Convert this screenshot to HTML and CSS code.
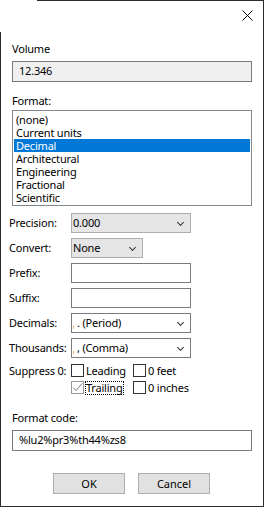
FILE: index.html
```html
<!DOCTYPE html>
<html lang="en">
<head>
    <meta charset="UTF-8">
    <meta name="viewport" content="width=device-width, initial-scale=1.0">
    <title>Format</title>
    <link rel="stylesheet" href="styles.css">
</head>
<body>
    <div class="dialog">
        <div class="titlebar">
            <span class="close">
                <svg width="11" height="11" viewBox="0 0 11 11"><path d="M0.5 0.5L10.5 10.5M10.5 0.5L0.5 10.5" stroke="#000" stroke-width="1"/></svg>
            </span>
        </div>

        <div class="content">
            <div class="label">Volume</div>
            <div class="field readonly">12.346</div>

            <div class="label format-label">Format:</div>
            <div class="listbox">
                <div class="item">(none)</div>
                <div class="item">Current units</div>
                <div class="item selected">Decimal</div>
                <div class="item">Architectural</div>
                <div class="item">Engineering</div>
                <div class="item">Fractional</div>
                <div class="item">Scientific</div>
            </div>

            <div class="form">
                <div class="row-label">Precision:</div>
                <div class="combo">0.000<span class="chev"></span></div>

                <div class="row-label">Convert:</div>
                <div class="combo short">None<span class="chev"></span></div>

                <div class="row-label">Prefix:</div>
                <div class="edit"></div>

                <div class="row-label">Suffix:</div>
                <div class="edit"></div>

                <div class="row-label">Decimals:</div>
                <div class="combo editable"><span class="caret"></span>. (Period)<span class="chev"></span></div>

                <div class="row-label">Thousands:</div>
                <div class="combo editable"><span class="caret"></span>, (Comma)<span class="chev"></span></div>
            </div>

            <div class="suppress">
                <div class="row-label">Suppress 0:</div>
                <div class="checks">
                    <label class="check"><span class="box"></span>Leading</label>
                    <label class="check"><span class="box"></span>0 feet</label>
                    <label class="check"><span class="box checked"><svg width="11" height="11" viewBox="0 0 11 11"><path d="M1 5.5L4 8.5L10 1.5" fill="none" stroke="#7a7a7a" stroke-width="1"/></svg></span><span class="focus">Trailing</span></label>
                    <label class="check"><span class="box"></span>0 inches</label>
                </div>
            </div>

            <div class="label code-label">Format code:</div>
            <div class="field">%lu2%pr3%th44%zs8</div>

            <div class="buttons">
                <button class="btn">OK</button>
                <button class="btn">Cancel</button>
            </div>
        </div>
    </div>
</body>
</html>
```

FILE: styles.css
```css
body {
    margin: 0;
    background: #fff;
    font-family: "Noto Sans", "Open Sans", sans-serif;
    font-size: 11px;
    letter-spacing: -0.2px;
    color: #000;
}
.dialog {
    position: relative;
    width: 264px;
    height: 507px;
    box-sizing: border-box;
    border-right: 1px solid #2b2b2b;
    border-bottom: 1px solid #2b2b2b;
    background: #fff;
}
/* window frame pieces peeking in at the top and left */
.dialog::before {
    content: "";
    position: absolute;
    top: 0;
    left: 37px;
    right: -1px;
    height: 1px;
    background: #2b2b2b;
}
.dialog::after {
    content: "";
    position: absolute;
    top: 32px;
    left: 0;
    bottom: 0;
    width: 1px;
    background: #2b2b2b;
}
.titlebar {
    height: 32px;
    display: flex;
    justify-content: flex-end;
    align-items: flex-start;
}
.close {
    display: block;
    width: 11px;
    height: 11px;
    margin: 10px 10px 0 0;
}
.close svg { display: block; }

.content {
    padding: 0 11px 0 12px;
    white-space: nowrap;
}
.label {
    line-height: 16px;
    margin-top: 9px;
    margin-bottom: 4px;
}
.format-label {
    margin-top: 11px;
    margin-bottom: 1px;
}
.code-label {
    margin-top: 16px;
    margin-bottom: 4px;
}
.field {
    height: 21px;
    box-sizing: border-box;
    border: 1px solid #7a7a7a;
    line-height: 18px;
    padding: 0 6px;
}
.readonly { background: #f0f0f0; }

.listbox {
    height: 96px;
    box-sizing: border-box;
    border: 1px solid #828790;
    padding: 2px 1px 1px 1px;
}
.item {
    height: 13px;
    line-height: 13px;
    padding-left: 2px;
}
.selected {
    background: #0078d7;
    color: #fff;
}

.form {
    display: grid;
    grid-template-columns: 62px 120px;
    grid-auto-rows: 20px;
    row-gap: 5px;
    margin: 7px 0 0 -3px;
}
.row-label {
    line-height: 20px;
}
.combo {
    position: relative;
    box-sizing: border-box;
    border: 1px solid #adadad;
    background: #e5e5e5;
    line-height: 18px;
    padding-left: 1px;
}
.combo.short { width: 72px; }
.combo.editable {
    background: #fff;
    border-color: #7a7a7a;
    padding-left: 1px;
}
.chev {
    position: absolute;
    right: 7px;
    top: 6px;
    width: 4px;
    height: 4px;
    border-right: 1px solid #333;
    border-bottom: 1px solid #333;
    transform: rotate(45deg);
}
.caret {
    display: inline-block;
    width: 1px;
    height: 3px;
    background: #f0b070;
    margin-right: 3px;
    vertical-align: -2px;
}
.edit {
    box-sizing: border-box;
    border: 1px solid #7a7a7a;
    background: #fff;
}

.suppress {
    display: grid;
    grid-template-columns: 62px auto;
    margin: 6px 0 0 -3px;
}
.suppress .row-label { line-height: 13px; }
.checks {
    display: grid;
    grid-template-columns: 62px auto;
    row-gap: 4px;
}
.check {
    display: flex;
    align-items: center;
    height: 13px;
    line-height: 13px;
}
.box {
    width: 13px;
    height: 13px;
    box-sizing: border-box;
    border: 1px solid #333;
    background: #fff;
    margin-right: 2px;
    flex: none;
}
.box.checked {
    border-color: #999;
    display: flex;
    align-items: center;
    justify-content: center;
}
.focus {
    outline: 1px dotted #000;
    line-height: 12px;
}

.buttons {
    display: flex;
    justify-content: center;
    gap: 13px;
    margin: 22px 0 0 -1px;
}
.btn {
    width: 72px;
    height: 21px;
    padding: 0;
    border: 1px solid #adadad;
    background: #e1e1e1;
    font: inherit;
    color: #000;
}
```
